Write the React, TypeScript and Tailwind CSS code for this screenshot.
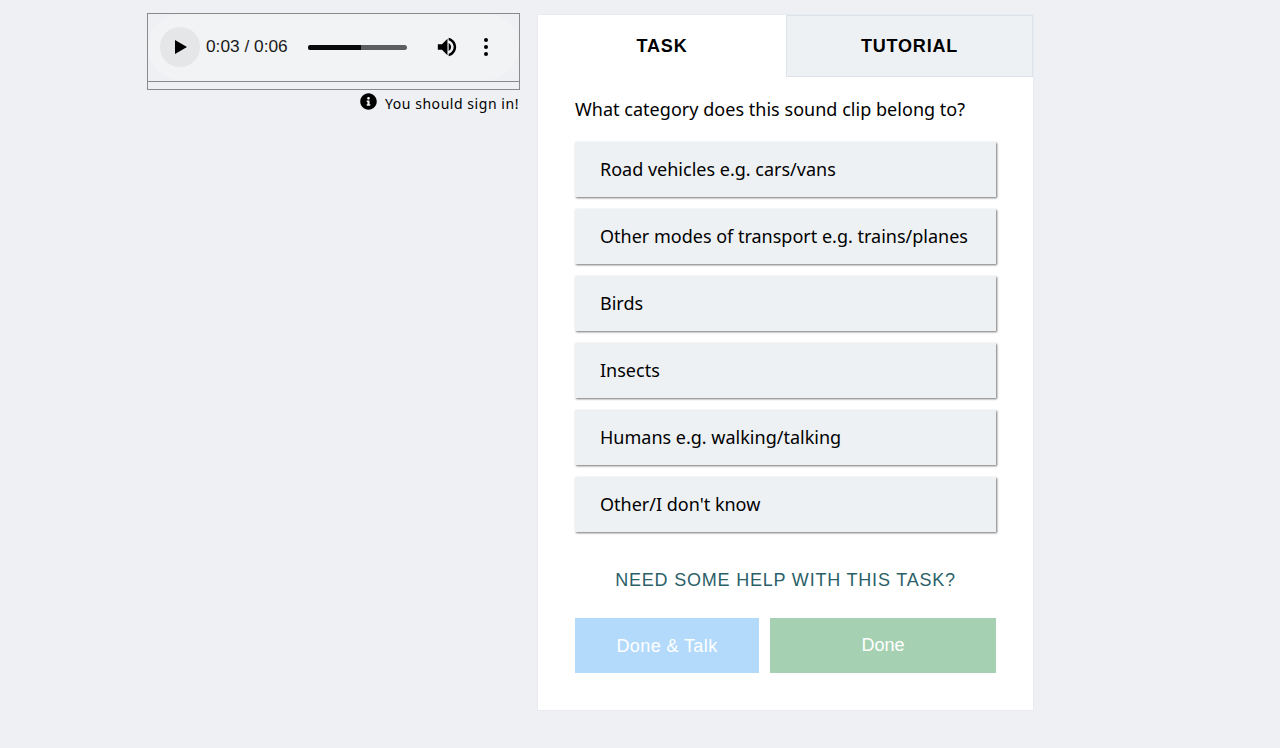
import { FaInfoCircle } from 'react-icons/fa';

const answers = [
  'Road vehicles e.g. cars/vans',
  'Other modes of transport e.g. trains/planes',
  'Birds',
  'Insects',
  'Humans e.g. walking/talking',
  "Other/I don't know",
];

function AudioPlayer() {
  return (
    <div className="border border-[#8a8a8a] w-[373px] h-[77px] flex flex-col">
      <div className="h-[66px] bg-[#f1f3f4] rounded-[33px] flex items-center pl-[12px] font-['Liberation_Sans',sans-serif]">
        <div className="w-10 h-10 rounded-full bg-[#e5e6e7] flex items-center justify-center shrink-0 pl-[2px]">
          <svg width="14" height="16" viewBox="0 0 14 16">
            <path d="M1 1 L13 8 L1 15 Z" fill="#000" />
          </svg>
        </div>
        <span className="ml-[6px] text-[17.3px] text-[#1a1a1a] w-[102px] whitespace-nowrap">0:03 / 0:06</span>
        <div className="h-[5px] w-[99px] rounded-full bg-[#5e5e5e] overflow-hidden">
          <div className="h-full w-[53px] bg-[#0a0a0a]" />
        </div>
        <svg className="ml-[29px]" width="22" height="22" viewBox="0 0 24 24">
          <path
            d="M2 9v6h4.500l6 6V3l-6 6H2zm14.500 3c0-1.900-1.100-3.600-2.700-4.400v8.800c1.600-.8 2.700-2.500 2.700-4.400zM13.800 1.800v2.900c3.100.9 5.400 3.800 5.400 7.300s-2.300 6.400-5.400 7.300v2.900c4.700-1 8.200-5.200 8.200-10.200S18.500 2.800 13.800 1.800z"
            fill="#000"
          />
        </svg>
        <div className="ml-[26px] flex flex-col gap-[3px]">
          <div className="w-[4px] h-[4px] rounded-full bg-black" />
          <div className="w-[4px] h-[4px] rounded-full bg-black" />
          <div className="w-[4px] h-[4px] rounded-full bg-black" />
        </div>
      </div>
      <div className="border-t border-[#8a8a8a] mt-auto h-[8px]" />
    </div>
  );
}

export default function App() {
  return (
    <div className="min-h-[748px] bg-[#eef0f4] flex items-start pl-[147px] pt-[13px] gap-[17px] font-['Noto_Sans',sans-serif] text-black">
      <div className="w-[373px]">
        <AudioPlayer />
        <div className="flex justify-end items-center mt-[3px] pr-[1px] text-[14px] leading-[20px] tracking-[0.55px]">
          <FaInfoCircle size={17} className="mr-[8px] mb-[4px]" />
          <span className="mt-[1px]">You should sign in!</span>
        </div>
      </div>

      <div className="mt-[1px] w-[497px] h-[697px] bg-white border border-[#e8ebef]">
        <div className="flex h-[62px]">
          <div className="w-[248px] flex items-center justify-center font-['Liberation_Sans',sans-serif] font-bold text-[18px] tracking-[0.8px]">
            TASK
          </div>
          <div className="flex-1 bg-[#eef1f4] border border-[#dde3ea] flex items-center justify-center font-['Liberation_Sans',sans-serif] font-bold text-[18px] tracking-[0.8px]">
            TUTORIAL
          </div>
        </div>

        <div className="px-[37px] pt-[19px]">
          <p className="text-[18px] leading-[26px] tracking-[0.03px]">What category does this sound clip belong to?</p>

          <div className="mt-[20px] flex flex-col gap-[12px]">
            {answers.map(answer => (
              <div
                key={answer}
                className="h-[55px] w-[421px] bg-[#eef1f4] pl-[25px] flex items-center text-[18px] shadow-[1px_1px_2px_rgba(0,0,0,0.55)]"
              >
                {answer}
              </div>
            ))}
          </div>

          <p className="mt-[36px] text-center font-['Liberation_Sans',sans-serif] text-[18px] leading-[24px] tracking-[0.8px] text-[#2b5f68]">
            NEED SOME HELP WITH THIS TASK?
          </p>

          <div className="mt-[26px] flex gap-[11px] w-[421px] font-['Liberation_Sans',sans-serif] text-[18px] text-white">
            <div className="w-[184px] h-[55px] bg-[#b3dafb] flex items-center justify-center tracking-[0.4px] pt-[2px]">
              Done &amp; Talk
            </div>
            <div className="flex-1 h-[55px] bg-[#a5d1b2] flex items-center justify-center">
              Done
            </div>
          </div>
        </div>
      </div>
    </div>
  );
}
